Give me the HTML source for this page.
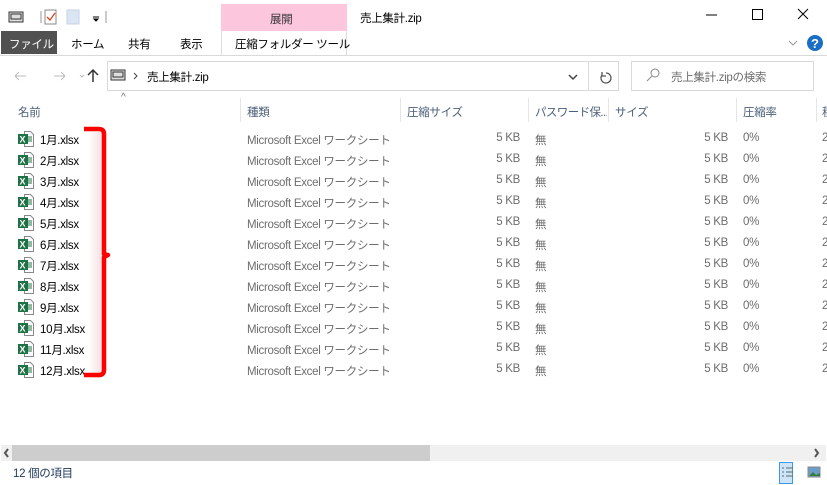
<!DOCTYPE html>
<html><head><meta charset="utf-8"><style>
*{margin:0;padding:0;box-sizing:border-box}
body{width:827px;height:485px;background:#fff;font-family:"Liberation Sans","Noto Sans CJK JP",sans-serif;font-size:11.5px;letter-spacing:-0.3px;color:#000;position:relative;overflow:hidden}
.a{position:absolute;white-space:nowrap}
.g{color:#6d6d6d}
.hd{color:#4c607a}
.sep{position:absolute;top:98px;width:1px;height:24px;background:#e5e5e5}
.row{position:absolute;left:0;width:827px;height:21px}
.row span{position:absolute;top:3px;white-space:nowrap}
</style></head><body>
<div class="a" style="left:221px;top:4px;width:126px;height:27px;background:#fcc6dd"></div>
<div class="a" style="left:270px;top:11px;color:#333">展開</div>
<div class="a" style="left:360px;top:10px;">売上集計.zip</div>
<svg class="a" style="left:8px;top:9px" width="100" height="16"><rect x="1" y="3" width="14" height="10" fill="#ddd" stroke="#333"/><rect x="3" y="5" width="10" height="5" fill="none" stroke="#333"/><line x1="33" y1="2" x2="33" y2="14" stroke="#999"/><rect x="37" y="1" width="11" height="14" fill="#fff" stroke="#888"/><path d="M39 8l3 3 5-7" stroke="#e04020" fill="none" stroke-width="1.3"/><rect x="59" y="1" width="12" height="14" fill="#dbe6f4" stroke="#c5d3e6"/><path d="M85 8h6M86 10h4l-2 2z" stroke="#000" fill="#000"/><line x1="98" y1="2" x2="98" y2="14" stroke="#999"/></svg>
<svg class="a" style="left:700px;top:6px" width="120" height="20"><line x1="6" y1="9" x2="17" y2="9" stroke="#000"/><rect x="52.5" y="3.5" width="10" height="10" fill="none" stroke="#000"/><path d="M98 3l10 10M108 3l-10 10" stroke="#000"/></svg>
<div class="a" style="left:1px;top:31px;width:56px;height:23px;background:#515151;color:#fff;padding:5px 0 0 8px">ファイル</div>
<div class="a" style="left:71px;top:36px">ホーム</div>
<div class="a" style="left:128px;top:36px">共有</div>
<div class="a" style="left:180px;top:36px">表示</div>
<div class="a" style="left:221px;top:31px;width:126px;height:24px;border-left:1px solid #ddd;border-right:1px solid #ddd;background:#fff"></div>
<div class="a" style="left:235px;top:36px">圧縮フォルダー ツール</div>
<div class="a" style="left:0;top:55px;width:827px;height:1px;background:#dadada"></div>
<svg class="a" style="left:785px;top:33px" width="40" height="20"><path d="M4 8l4 4 4-4" stroke="#999" fill="none"/><circle cx="30" cy="10" r="8" fill="#1a6fc4"/><text x="26" y="15" fill="#fff" font-size="13" font-weight="bold" font-family="Liberation Sans">?</text></svg>
<svg class="a" style="left:10px;top:66px" width="95" height="20"><path d="M5 10h11M5 10l4-4M5 10l4 4" stroke="#bbb" fill="none"/><path d="M44 10h11M55 10l-4-4M55 10l-4 4" stroke="#bbb" fill="none"/><path d="M70 9l2 2 2-2" stroke="#bbb" fill="none"/><path d="M83 16V4M78 9l5-5 5 5" stroke="#333" fill="none" stroke-width="1.5"/></svg>
<div class="a" style="left:107px;top:61px;width:512px;height:30px;border:1px solid #d9d9d9"></div>
<div class="a" style="left:588px;top:61px;width:1px;height:30px;background:#d9d9d9"></div>
<svg class="a" style="left:110px;top:67px" width="36" height="18"><rect x="1" y="3" width="14" height="10" fill="#ddd" stroke="#333"/><rect x="3" y="5" width="10" height="5" fill="none" stroke="#333"/><path d="M24 6l3 3-3 3" stroke="#444" fill="none"/></svg>
<div class="a" style="left:147px;top:69px">売上集計.zip</div>
<svg class="a" style="left:566px;top:68px" width="50" height="18"><path d="M3 7l4 4 4-4" stroke="#444" fill="none" stroke-width="1.5"/><path d="M40 5a5 5 0 1 1-4 2M36 4v4h4" stroke="#555" fill="none" stroke-width="1.3"/></svg>
<div class="a" style="left:631px;top:61px;width:183px;height:30px;border:1px solid #d9d9d9"></div>
<svg class="a" style="left:645px;top:67px" width="16" height="16"><circle cx="10" cy="6" r="4" fill="none" stroke="#888"/><path d="M7 9l-5 5" stroke="#888"/></svg>
<div class="a g" style="left:671px;top:69px">売上集計.zipの検索</div>
<div class="a g" style="left:121px;top:92px;font-size:10px">^</div>
<div class="a hd" style="left:18px;top:104px">名前</div>
<div class="sep" style="left:240px"></div>
<div class="a hd" style="left:247px;top:104px">種類</div>
<div class="sep" style="left:400px"></div>
<div class="a hd" style="left:407px;top:104px">圧縮サイズ</div>
<div class="sep" style="left:528px"></div>
<div class="a hd" style="left:535px;top:104px;width:72px;overflow:hidden;letter-spacing:-0.6px">パスワード保...</div>
<div class="sep" style="left:608px"></div>
<div class="a hd" style="left:615px;top:104px">サイズ</div>
<div class="sep" style="left:736px"></div>
<div class="a hd" style="left:743px;top:104px">圧縮率</div>
<div class="sep" style="left:816px"></div>
<div class="a hd" style="left:822px;top:104px">種</div>
<div class="row" style="top:129px"><svg style="position:absolute;left:18px;top:2px" width="16" height="17"><path d="M6.5 .5h6l3 3v12h-9z" fill="#fff" stroke="#888"/><path d="M10 6h4M10 8h4M10 10h4" stroke="#217346"/><rect x="0" y="3" width="10" height="10" fill="#1e7145"/><text x="1.5" y="11.5" fill="#fff" font-size="9" font-weight="bold" font-family="Liberation Sans">X</text></svg><span style="left:40px">1月.xlsx</span><span class="g" style="left:247px">Microsoft Excel ワークシート</span><span class="g" style="right:307px">5 KB</span><span class="g" style="left:535px">無</span><span class="g" style="right:99px">5 KB</span><span class="g" style="left:743px">0%</span><span class="g" style="left:822px">2</span></div>
<div class="row" style="top:150px"><svg style="position:absolute;left:18px;top:2px" width="16" height="17"><path d="M6.5 .5h6l3 3v12h-9z" fill="#fff" stroke="#888"/><path d="M10 6h4M10 8h4M10 10h4" stroke="#217346"/><rect x="0" y="3" width="10" height="10" fill="#1e7145"/><text x="1.5" y="11.5" fill="#fff" font-size="9" font-weight="bold" font-family="Liberation Sans">X</text></svg><span style="left:40px">2月.xlsx</span><span class="g" style="left:247px">Microsoft Excel ワークシート</span><span class="g" style="right:307px">5 KB</span><span class="g" style="left:535px">無</span><span class="g" style="right:99px">5 KB</span><span class="g" style="left:743px">0%</span><span class="g" style="left:822px">2</span></div>
<div class="row" style="top:171px"><svg style="position:absolute;left:18px;top:2px" width="16" height="17"><path d="M6.5 .5h6l3 3v12h-9z" fill="#fff" stroke="#888"/><path d="M10 6h4M10 8h4M10 10h4" stroke="#217346"/><rect x="0" y="3" width="10" height="10" fill="#1e7145"/><text x="1.5" y="11.5" fill="#fff" font-size="9" font-weight="bold" font-family="Liberation Sans">X</text></svg><span style="left:40px">3月.xlsx</span><span class="g" style="left:247px">Microsoft Excel ワークシート</span><span class="g" style="right:307px">5 KB</span><span class="g" style="left:535px">無</span><span class="g" style="right:99px">5 KB</span><span class="g" style="left:743px">0%</span><span class="g" style="left:822px">2</span></div>
<div class="row" style="top:192px"><svg style="position:absolute;left:18px;top:2px" width="16" height="17"><path d="M6.5 .5h6l3 3v12h-9z" fill="#fff" stroke="#888"/><path d="M10 6h4M10 8h4M10 10h4" stroke="#217346"/><rect x="0" y="3" width="10" height="10" fill="#1e7145"/><text x="1.5" y="11.5" fill="#fff" font-size="9" font-weight="bold" font-family="Liberation Sans">X</text></svg><span style="left:40px">4月.xlsx</span><span class="g" style="left:247px">Microsoft Excel ワークシート</span><span class="g" style="right:307px">5 KB</span><span class="g" style="left:535px">無</span><span class="g" style="right:99px">5 KB</span><span class="g" style="left:743px">0%</span><span class="g" style="left:822px">2</span></div>
<div class="row" style="top:213px"><svg style="position:absolute;left:18px;top:2px" width="16" height="17"><path d="M6.5 .5h6l3 3v12h-9z" fill="#fff" stroke="#888"/><path d="M10 6h4M10 8h4M10 10h4" stroke="#217346"/><rect x="0" y="3" width="10" height="10" fill="#1e7145"/><text x="1.5" y="11.5" fill="#fff" font-size="9" font-weight="bold" font-family="Liberation Sans">X</text></svg><span style="left:40px">5月.xlsx</span><span class="g" style="left:247px">Microsoft Excel ワークシート</span><span class="g" style="right:307px">5 KB</span><span class="g" style="left:535px">無</span><span class="g" style="right:99px">5 KB</span><span class="g" style="left:743px">0%</span><span class="g" style="left:822px">2</span></div>
<div class="row" style="top:234px"><svg style="position:absolute;left:18px;top:2px" width="16" height="17"><path d="M6.5 .5h6l3 3v12h-9z" fill="#fff" stroke="#888"/><path d="M10 6h4M10 8h4M10 10h4" stroke="#217346"/><rect x="0" y="3" width="10" height="10" fill="#1e7145"/><text x="1.5" y="11.5" fill="#fff" font-size="9" font-weight="bold" font-family="Liberation Sans">X</text></svg><span style="left:40px">6月.xlsx</span><span class="g" style="left:247px">Microsoft Excel ワークシート</span><span class="g" style="right:307px">5 KB</span><span class="g" style="left:535px">無</span><span class="g" style="right:99px">5 KB</span><span class="g" style="left:743px">0%</span><span class="g" style="left:822px">2</span></div>
<div class="row" style="top:255px"><svg style="position:absolute;left:18px;top:2px" width="16" height="17"><path d="M6.5 .5h6l3 3v12h-9z" fill="#fff" stroke="#888"/><path d="M10 6h4M10 8h4M10 10h4" stroke="#217346"/><rect x="0" y="3" width="10" height="10" fill="#1e7145"/><text x="1.5" y="11.5" fill="#fff" font-size="9" font-weight="bold" font-family="Liberation Sans">X</text></svg><span style="left:40px">7月.xlsx</span><span class="g" style="left:247px">Microsoft Excel ワークシート</span><span class="g" style="right:307px">5 KB</span><span class="g" style="left:535px">無</span><span class="g" style="right:99px">5 KB</span><span class="g" style="left:743px">0%</span><span class="g" style="left:822px">2</span></div>
<div class="row" style="top:276px"><svg style="position:absolute;left:18px;top:2px" width="16" height="17"><path d="M6.5 .5h6l3 3v12h-9z" fill="#fff" stroke="#888"/><path d="M10 6h4M10 8h4M10 10h4" stroke="#217346"/><rect x="0" y="3" width="10" height="10" fill="#1e7145"/><text x="1.5" y="11.5" fill="#fff" font-size="9" font-weight="bold" font-family="Liberation Sans">X</text></svg><span style="left:40px">8月.xlsx</span><span class="g" style="left:247px">Microsoft Excel ワークシート</span><span class="g" style="right:307px">5 KB</span><span class="g" style="left:535px">無</span><span class="g" style="right:99px">5 KB</span><span class="g" style="left:743px">0%</span><span class="g" style="left:822px">2</span></div>
<div class="row" style="top:297px"><svg style="position:absolute;left:18px;top:2px" width="16" height="17"><path d="M6.5 .5h6l3 3v12h-9z" fill="#fff" stroke="#888"/><path d="M10 6h4M10 8h4M10 10h4" stroke="#217346"/><rect x="0" y="3" width="10" height="10" fill="#1e7145"/><text x="1.5" y="11.5" fill="#fff" font-size="9" font-weight="bold" font-family="Liberation Sans">X</text></svg><span style="left:40px">9月.xlsx</span><span class="g" style="left:247px">Microsoft Excel ワークシート</span><span class="g" style="right:307px">5 KB</span><span class="g" style="left:535px">無</span><span class="g" style="right:99px">5 KB</span><span class="g" style="left:743px">0%</span><span class="g" style="left:822px">2</span></div>
<div class="row" style="top:318px"><svg style="position:absolute;left:18px;top:2px" width="16" height="17"><path d="M6.5 .5h6l3 3v12h-9z" fill="#fff" stroke="#888"/><path d="M10 6h4M10 8h4M10 10h4" stroke="#217346"/><rect x="0" y="3" width="10" height="10" fill="#1e7145"/><text x="1.5" y="11.5" fill="#fff" font-size="9" font-weight="bold" font-family="Liberation Sans">X</text></svg><span style="left:40px">10月.xlsx</span><span class="g" style="left:247px">Microsoft Excel ワークシート</span><span class="g" style="right:307px">5 KB</span><span class="g" style="left:535px">無</span><span class="g" style="right:99px">5 KB</span><span class="g" style="left:743px">0%</span><span class="g" style="left:822px">2</span></div>
<div class="row" style="top:339px"><svg style="position:absolute;left:18px;top:2px" width="16" height="17"><path d="M6.5 .5h6l3 3v12h-9z" fill="#fff" stroke="#888"/><path d="M10 6h4M10 8h4M10 10h4" stroke="#217346"/><rect x="0" y="3" width="10" height="10" fill="#1e7145"/><text x="1.5" y="11.5" fill="#fff" font-size="9" font-weight="bold" font-family="Liberation Sans">X</text></svg><span style="left:40px">11月.xlsx</span><span class="g" style="left:247px">Microsoft Excel ワークシート</span><span class="g" style="right:307px">5 KB</span><span class="g" style="left:535px">無</span><span class="g" style="right:99px">5 KB</span><span class="g" style="left:743px">0%</span><span class="g" style="left:822px">2</span></div>
<div class="row" style="top:360px"><svg style="position:absolute;left:18px;top:2px" width="16" height="17"><path d="M6.5 .5h6l3 3v12h-9z" fill="#fff" stroke="#888"/><path d="M10 6h4M10 8h4M10 10h4" stroke="#217346"/><rect x="0" y="3" width="10" height="10" fill="#1e7145"/><text x="1.5" y="11.5" fill="#fff" font-size="9" font-weight="bold" font-family="Liberation Sans">X</text></svg><span style="left:40px">12月.xlsx</span><span class="g" style="left:247px">Microsoft Excel ワークシート</span><span class="g" style="right:307px">5 KB</span><span class="g" style="left:535px">無</span><span class="g" style="right:99px">5 KB</span><span class="g" style="left:743px">0%</span><span class="g" style="left:822px">2</span></div>
<div class="a" style="left:88px;top:132px;width:14px;height:246px;background:linear-gradient(to right,rgba(255,255,255,0),rgba(240,210,215,.7))"></div>
<svg class="a" style="left:80px;top:122px" width="40" height="266"><path d="M4 7h15q5 0 5 5v120l4 1-4 2v113q0 5-5 5H4" fill="none" stroke="#f00" stroke-width="4.5" stroke-linejoin="round"/></svg>
<div class="a" style="left:1px;top:445px;width:825px;height:16px;background:#f0f0f0"></div>
<div class="a" style="left:12px;top:445px;width:418px;height:16px;background:#cdcdcd"></div>
<svg class="a" style="left:0;top:445px" width="16" height="16"><path d="M8 4l-3 4 3 4" stroke="#555" fill="none" stroke-width="2"/></svg>
<svg class="a" style="left:810px;top:445px" width="16" height="16"><path d="M5 4l3 4-3 4" stroke="#555" fill="none" stroke-width="2"/></svg>
<div class="a" style="left:13px;top:465px;color:#1e395b">12 個の項目</div>
<div class="a" style="left:54px;top:466px;width:1px;height:14px;background:#eee"></div>
<div class="a" style="left:779px;top:462px;width:14px;height:22px;background:#cce4f7;border:1px solid #3c9ae8"></div>
<svg class="a" style="left:781px;top:466px" width="44" height="16"><path d="M1 2h2M5 2h7M1 6h2M5 6h7M1 10h2M5 10h7" stroke="#666"/><rect x="27" y="1" width="12" height="10" fill="#6a9ec9" stroke="#888"/><path d="M28 10l4-4 3 3 4-2v3z" fill="#3b7a3b"/></svg>
</body></html>
